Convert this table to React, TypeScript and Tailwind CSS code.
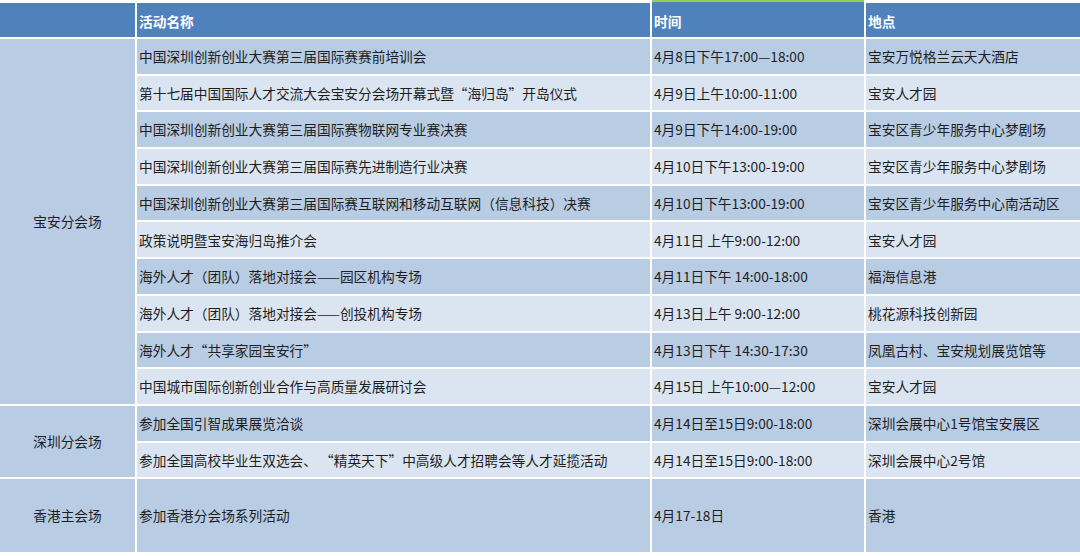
import React from "react";

type Row = { name: string; time: string; place: string };

const baoan: Row[] = [
  { name: "中国深圳创新创业大赛第三届国际赛赛前培训会", time: "4月8日下午17:00—18:00", place: "宝安万悦格兰云天大酒店" },
  { name: "第十七届中国国际人才交流大会宝安分会场开幕式暨“海归岛”开岛仪式", time: "4月9日上午10:00-11:00", place: "宝安人才园" },
  { name: "中国深圳创新创业大赛第三届国际赛物联网专业赛决赛", time: "4月9日下午14:00-19:00", place: "宝安区青少年服务中心梦剧场" },
  { name: "中国深圳创新创业大赛第三届国际赛先进制造行业决赛", time: "4月10日下午13:00-19:00", place: "宝安区青少年服务中心梦剧场" },
  { name: "中国深圳创新创业大赛第三届国际赛互联网和移动互联网（信息科技）决赛", time: "4月10日下午13:00-19:00", place: "宝安区青少年服务中心南活动区" },
  { name: "政策说明暨宝安海归岛推介会", time: "4月11日 上午9:00-12:00", place: "宝安人才园" },
  { name: "海外人才（团队）落地对接会——园区机构专场", time: "4月11日下午 14:00-18:00", place: "福海信息港" },
  { name: "海外人才（团队）落地对接会——创投机构专场", time: "4月13日上午 9:00-12:00", place: "桃花源科技创新园" },
  { name: "海外人才“共享家园宝安行”", time: "4月13日下午 14:30-17:30", place: "凤凰古村、宝安规划展览馆等" },
  { name: "中国城市国际创新创业合作与高质量发展研讨会", time: "4月15日 上午10:00—12:00", place: "宝安人才园" },
];

const shenzhen: Row[] = [
  { name: "参加全国引智成果展览洽谈", time: "4月14日至15日9:00-18:00", place: "深圳会展中心1号馆宝安展区" },
  { name: "参加全国高校毕业生双选会、 “精英天下”中高级人才招聘会等人才延揽活动", time: "4月14日至15日9:00-18:00", place: "深圳会展中心2号馆" },
];

const hongkong: Row = { name: "参加香港分会场系列活动", time: "4月17-18日", place: "香港" };

const dark = "bg-[#b8cce4]";
const light = "bg-[#dbe5f1]";

function Cells({ row, index }: { row: Row; index: number }) {
  const bg = index % 2 === 0 ? dark : light;
  return (
    <>
      <div className={`${bg} flex items-center pl-[2px] whitespace-nowrap overflow-hidden`}>{row.name}</div>
      <div className={`${bg} flex items-center pl-[2px] whitespace-nowrap overflow-hidden`}>{row.time}</div>
      <div className={`${bg} flex items-center pl-[2px] whitespace-nowrap overflow-hidden`}>{row.place}</div>
    </>
  );
}

export default function App() {
  return (
    <div
      className="w-[1080px] h-[556px] bg-white overflow-hidden text-[13.7px] text-[#1e1e1e]"
      style={{ fontFamily: '"Noto Sans CJK SC", "Noto Sans", sans-serif' }}
    >
      <div className="grid grid-cols-[135px_513px_212px_1fr] grid-rows-[37px_repeat(12,34.7px)_73px] gap-x-[2px] gap-y-[2px]">
        {/* header */}
        <div className="bg-[#4f81bd] border-t-[3px] border-white" />
        <div className="bg-[#4f81bd] border-t-[3px] border-white flex items-center pl-[2px] pt-[3px] font-bold text-white">活动名称</div>
        <div className="bg-[#4f81bd] border-t-[2px] border-[#92d050] flex items-center pl-[2px] pt-[4px] font-bold text-white">时间</div>
        <div className="bg-[#4f81bd] border-t-[3px] border-white flex items-center pl-[2px] pt-[3px] font-bold text-white">地点</div>

        {/* 宝安 */}
        <div className={`${dark} row-span-10 flex items-center justify-center`}>宝安分会场</div>
        {baoan.map((r, i) => (
          <Cells key={r.name} row={r} index={i} />
        ))}

        {/* 深圳 */}
        <div className={`${dark} row-span-2 flex items-center justify-center`}>深圳分会场</div>
        {shenzhen.map((r, i) => (
          <Cells key={r.name} row={r} index={i + 10} />
        ))}

        {/* 香港 */}
        <div className={`${dark} flex items-center justify-center`}>香港主会场</div>
        <Cells row={hongkong} index={12} />
      </div>
    </div>
  );
}
